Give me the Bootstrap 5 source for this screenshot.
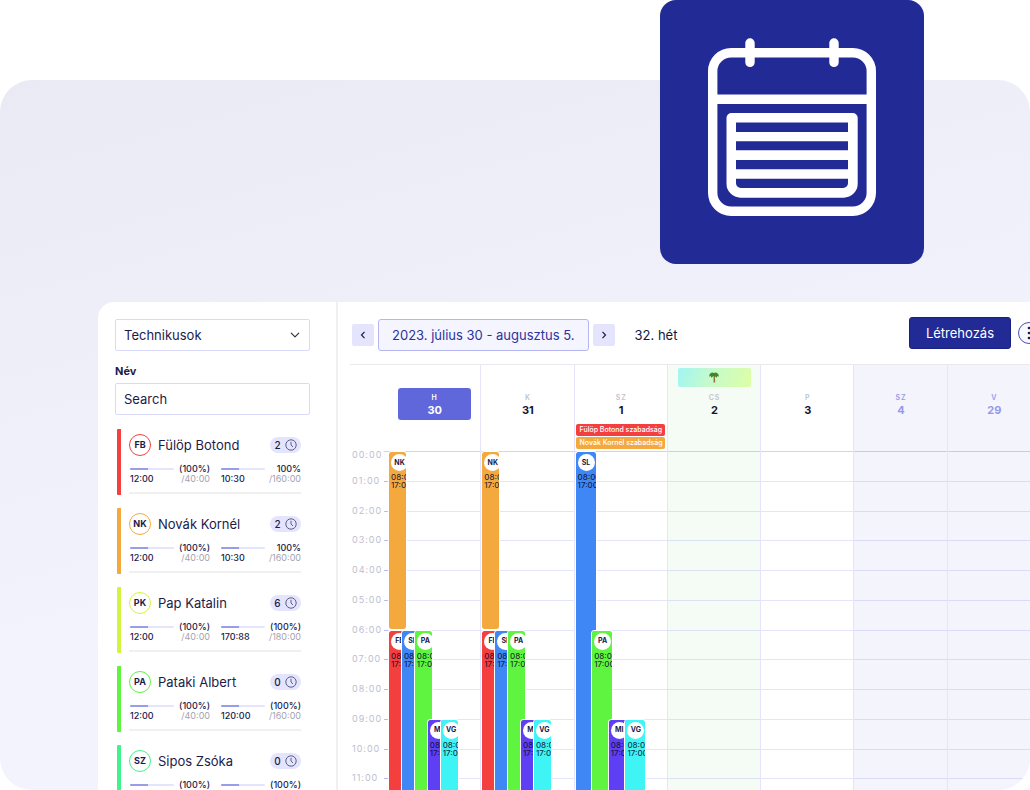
<!DOCTYPE html>
<html lang="hu">
<head>
<meta charset="utf-8">
<meta name="viewport" content="width=device-width, initial-scale=1">
<title>Naptár</title>
<link href="https://cdn.jsdelivr.net/npm/bootstrap@5.3.0/dist/css/bootstrap.min.css" rel="stylesheet">
<style>
  :root { --navy: #222a96; --ink: #1b1c4a; --lav: #e4e5fd; --line: #e4e5fb; --soft: #f0f0f1; }
  body { font-family: Inter, "Liberation Sans", sans-serif; color: var(--ink); font-size: 13px; line-height: 16px; background: #fff; }
  .hero-tile { top: 0; right: 106px; width: 264px; border-radius: 16px; background: var(--navy); z-index: 2; }
  .stage { margin-top: 80px; padding: 222px 0 0 98px; border-radius: 32px; background: linear-gradient(165deg, #eaeaf5, #f3f3fd 60%); }
  .app-panel { margin-right: -10px; border-top-left-radius: 16px; }

  .side { width: 240px; padding: 17px 26px 0 17px; border-right: 2px solid var(--soft); }
  .side .form-select, .side .form-control { height: 32px; padding: 0 8px; font-size: 13px; line-height: 16px; color: var(--ink); border: 1px solid #d9daf9; border-radius: 2px; }
  .side .form-select { background-size: 10px; background-position: right 9px center; }
  .side .form-control { margin-bottom: 14px; }
  .side .form-control::placeholder { color: var(--ink); opacity: 1; }
  .side .form-label { font-size: 11px; font-weight: 700; margin: 12px 0 4px; }

  .tech { height: 66px; margin: 0 9px 13px 2px; border-left: 4px solid var(--c); border-radius: 1px; padding: 5px 0 0 8px; }
  .tech-in { height: 60px; border-bottom: 2px solid var(--soft); }
  .ring { width: 22px; height: 22px; border: 1px solid var(--c); border-radius: 50%; font-size: 9px; font-weight: 700; }
  .tech-name { font-size: 13px; margin-left: 7px; }
  .jobs { height: 16px; width: 31px; border-radius: 8px; background: var(--lav); font-size: 10px; font-weight: 500; gap: 4px; }
  .stats { display: grid; grid-template-columns: 1fr 1fr; font-size: 9px; line-height: 10px; font-weight: 500; margin-top: 8px; padding-left: 1px; gap: 11px; }
  .stats .of { color: #a3a3b0; font-weight: 400; }
  .stats .progress { width: 44px; height: 2px; background: var(--lav); border-radius: 1px; }
  .stats .progress-bar { width: 42%; background: #989ce9; }

  .toolbar { padding: 15px 0 15px 14px; }
  .period { padding-top: 2px; margin-bottom: -2px; }
  .arrow { width: 22px; height: 22px; background: var(--lav); border-radius: 2px; border: 0; padding: 0; }
  .range { height: 32px; margin: 0 4px; padding: 0 13px; font-size: 13px; line-height: 16px; color: #2c329c; background: #f5f5ff; border: 1px solid #b3b6f0; border-radius: 3px; }
  .week { color: #14153a; margin-left: 20px; }
  .create { height: 32px; padding: 0 16px; font-size: 13px; line-height: 16px; color: #fff; background: var(--navy); border: 1px solid #1a2182; border-radius: 3px; }
  .more { width: 22px; height: 22px; border: 1px solid #4a50b4; border-radius: 50%; background: #f8f8ff; padding: 0; margin-left: 7px; }

  .cal { margin-left: 12px; border-top: 1px solid #e9e9ee; display: grid; }
  .cal > * { grid-area: 1 / 1; }
  .hours { margin-top: 86px; height: 357px; display: grid; grid-template-rows: repeat(12, 1fr); }
  .hour { display: flex; min-height: 0; font-size: 9px; line-height: 10px; color: #bdbed0; letter-spacing: 1px; }
  .hour span { width: 34px; padding-left: 2px; margin-top: -5px; }
  .hour:first-child span { margin-top: -1px; }
  .hour i { width: 4px; border-top: 1px solid #b9bbf0; }
  .hour b { flex: 1; border-top: 1px solid var(--line); }
  .hour:first-child i, .hour:first-child b { border-color: #d0d2f8; }
  .days { margin-left: 37px; display: grid; grid-template-columns: repeat(7, 1fr); }
  .day { min-width: 0; border-left: 1px solid var(--line); }
  .day:first-child { border-left-color: transparent; }
  .day-top { height: 86px; }
  .banner { height: 23px; padding: 3px 9px 0 10px; }
  .holiday { height: 19px; border-radius: 2px; background: linear-gradient(110deg, #a2f5f3, #c9fbc8 50%, #ddfea4); }
  .date { height: 32px; margin: 0 9px 0 10px; border-radius: 3px; padding-top: 5px; text-align: center; font-size: 11px; line-height: 16px; font-weight: 700; color: #14153a; }
  .date small { display: block; font-size: 7px; line-height: 9px; font-weight: 600; letter-spacing: 1px; color: #c2c3cc; }
  .today { background: #6067db; }
  .today, .today small { color: #fff; }
  .weekend { background: rgba(96, 103, 219, .07); }
  .weekend .date, .weekend .date small { color: #9498ea; }
  .free { background: rgba(60, 200, 90, .06); }
  .leave { height: 12px; margin: 0 2px 1px 1px; padding-left: 4px; border-radius: 2px; font-size: 7px; line-height: 12px; font-weight: 500; color: #fff; background: var(--c); white-space: nowrap; overflow: hidden; }
  .day-top .date + .leave { margin-top: 4px; }
  .day-body { height: 357px; position: relative; }
  .ev { position: absolute; left: var(--x); top: var(--y); width: 19px; height: calc(100% - var(--y)); border: 1px solid #fff; border-radius: 3px; background: var(--c); background-clip: padding-box; padding: 2px 0 0 2px; overflow: hidden; font-size: 8px; line-height: 8px; font-weight: 500; color: rgba(10, 10, 40, .85); }
  .ev.half { height: 50%; }
  .ev.wide { width: 22px; }
  .ev span { display: flex; align-items: center; justify-content: center; width: 17px; height: 17px; border-radius: 50%; background: #fff; font-size: 7px; font-weight: 700; color: var(--ink); margin-bottom: 2px; }
</style>
</head>
<body>
<svg class="d-none" xmlns="http://www.w3.org/2000/svg">
  <symbol id="clock" viewBox="0 0 12 12"><circle cx="6" cy="6" r="5.2"/><path d="M6 2.8V6l2 2"/></symbol>
</svg>

<main class="vh-100 d-flex flex-column overflow-hidden position-relative">
  <svg class="hero-tile position-absolute" viewBox="0 0 264 264" fill="none" stroke="#fff" stroke-width="9.4" aria-hidden="true">
    <rect x="52.7" y="52.7" width="158.6" height="158.6" rx="18.5"/>
    <path d="M53 99.3H211"/>
    <path d="M90 43v19.400M174 43v19.400" stroke-linecap="round"/>
    <path fill="#fff" stroke="none" fill-rule="evenodd" d="M71.500 113h121.200a5 5 0 0 1 5 5v65.700a14 14 0 0 1-14 14H80.500a14 14 0 0 1-14-14V118a5 5 0 0 1 5-5ZM76 122.400V132h112v-9.600ZM76 141.200V150.300h112v-9.100ZM76 160v9.300h112V160ZM76 178.700v4.500a4.800 4.800 0 0 0 4.800 4.800h102.400a4.800 4.800 0 0 0 4.800-4.800v-4.500Z"/>
  </svg>

  <section class="stage flex-grow-1 d-flex overflow-hidden">
    <div class="app-panel bg-white flex-grow-1 d-flex overflow-hidden">

      <aside class="side flex-shrink-0">
        <select class="form-select" aria-label="Csoport"><option>Technikusok</option></select>
        <label class="form-label d-block" for="nev">Név</label>
        <input class="form-control" id="nev" type="text" placeholder="Search">

        <article class="tech" style="--c:#f43f3f"><div class="tech-in">
          <div class="d-flex align-items-center"><span class="ring d-flex align-items-center justify-content-center">FB</span><span class="tech-name">Fülöp Botond</span>
            <span class="jobs ms-auto d-flex align-items-center justify-content-center">2<svg width="12" height="12" fill="none" stroke="#4d4f7d" stroke-width=".9"><use href="#clock"/></svg></span></div>
          <div class="stats">
            <div><div class="d-flex align-items-center justify-content-between"><div class="progress"><div class="progress-bar"></div></div><span>(100%)</span></div><div class="d-flex justify-content-between"><span>12:00</span><span class="of">/40:00</span></div></div>
            <div><div class="d-flex align-items-center justify-content-between"><div class="progress"><div class="progress-bar"></div></div><span>100%</span></div><div class="d-flex justify-content-between"><span>10:30</span><span class="of">/160:00</span></div></div>
          </div></div></article>

        <article class="tech" style="--c:#f4a93f"><div class="tech-in">
          <div class="d-flex align-items-center"><span class="ring d-flex align-items-center justify-content-center">NK</span><span class="tech-name">Novák Kornél</span>
            <span class="jobs ms-auto d-flex align-items-center justify-content-center">2<svg width="12" height="12" fill="none" stroke="#4d4f7d" stroke-width=".9"><use href="#clock"/></svg></span></div>
          <div class="stats">
            <div><div class="d-flex align-items-center justify-content-between"><div class="progress"><div class="progress-bar"></div></div><span>(100%)</span></div><div class="d-flex justify-content-between"><span>12:00</span><span class="of">/40:00</span></div></div>
            <div><div class="d-flex align-items-center justify-content-between"><div class="progress"><div class="progress-bar"></div></div><span>100%</span></div><div class="d-flex justify-content-between"><span>10:30</span><span class="of">/160:00</span></div></div>
          </div></div></article>

        <article class="tech" style="--c:#d3f43f"><div class="tech-in">
          <div class="d-flex align-items-center"><span class="ring d-flex align-items-center justify-content-center">PK</span><span class="tech-name">Pap Katalin</span>
            <span class="jobs ms-auto d-flex align-items-center justify-content-center">6<svg width="12" height="12" fill="none" stroke="#4d4f7d" stroke-width=".9"><use href="#clock"/></svg></span></div>
          <div class="stats">
            <div><div class="d-flex align-items-center justify-content-between"><div class="progress"><div class="progress-bar"></div></div><span>(100%)</span></div><div class="d-flex justify-content-between"><span>12:00</span><span class="of">/40:00</span></div></div>
            <div><div class="d-flex align-items-center justify-content-between"><div class="progress"><div class="progress-bar"></div></div><span>(100%)</span></div><div class="d-flex justify-content-between"><span>170:88</span><span class="of">/180:00</span></div></div>
          </div></div></article>

        <article class="tech" style="--c:#5ef43f"><div class="tech-in">
          <div class="d-flex align-items-center"><span class="ring d-flex align-items-center justify-content-center">PA</span><span class="tech-name">Pataki Albert</span>
            <span class="jobs ms-auto d-flex align-items-center justify-content-center">0<svg width="12" height="12" fill="none" stroke="#4d4f7d" stroke-width=".9"><use href="#clock"/></svg></span></div>
          <div class="stats">
            <div><div class="d-flex align-items-center justify-content-between"><div class="progress"><div class="progress-bar"></div></div><span>(100%)</span></div><div class="d-flex justify-content-between"><span>12:00</span><span class="of">/40:00</span></div></div>
            <div><div class="d-flex align-items-center justify-content-between"><div class="progress"><div class="progress-bar"></div></div><span>(100%)</span></div><div class="d-flex justify-content-between"><span>120:00</span><span class="of">/160:00</span></div></div>
          </div></div></article>

        <article class="tech" style="--c:#3ff48c"><div class="tech-in">
          <div class="d-flex align-items-center"><span class="ring d-flex align-items-center justify-content-center">SZ</span><span class="tech-name">Sipos Zsóka</span>
            <span class="jobs ms-auto d-flex align-items-center justify-content-center">0<svg width="12" height="12" fill="none" stroke="#4d4f7d" stroke-width=".9"><use href="#clock"/></svg></span></div>
          <div class="stats">
            <div><div class="d-flex align-items-center justify-content-between"><div class="progress"><div class="progress-bar"></div></div><span>(100%)</span></div></div>
            <div><div class="d-flex align-items-center justify-content-between"><div class="progress"><div class="progress-bar"></div></div><span>(100%)</span></div></div>
          </div></div></article>
      </aside>

      <div class="flex-grow-1">
        <div class="toolbar d-flex align-items-start">
          <div class="period d-flex align-items-center">
            <button class="arrow d-flex align-items-center justify-content-center" type="button" aria-label="Előző hét"><svg width="10" height="10" viewBox="0 0 10 10" fill="none" stroke="#1b1c4a" stroke-width="1.200"><path d="M6.500 1.800 3.500 5l3 3.200"/></svg></button>
            <button class="range" type="button">2023. július 30 - augusztus 5.</button>
            <button class="arrow d-flex align-items-center justify-content-center" type="button" aria-label="Következő hét"><svg width="10" height="10" viewBox="0 0 10 10" fill="none" stroke="#1b1c4a" stroke-width="1.200"><path d="M3.500 1.800l3 3.200-3 3.200"/></svg></button>
            <span class="week">32. hét</span>
          </div>
          <div class="d-flex align-items-center ms-auto">
            <button class="create" type="button">Létrehozás</button>
            <button class="more d-flex align-items-center justify-content-center" type="button" aria-label="Továbbiak"><svg width="4" height="14" viewBox="0 0 4 14" fill="#1b1c4a"><circle cx="2" cy="2" r="1.300"/><circle cx="2" cy="7" r="1.300"/><circle cx="2" cy="12" r="1.300"/></svg></button>
          </div>
        </div>

        <div class="cal">
          <div class="hours">
            <div class="hour"><span>00:00</span><i></i><b></b></div>
            <div class="hour"><span>01:00</span><i></i><b></b></div>
            <div class="hour"><span>02:00</span><i></i><b></b></div>
            <div class="hour"><span>03:00</span><i></i><b></b></div>
            <div class="hour"><span>04:00</span><i></i><b></b></div>
            <div class="hour"><span>05:00</span><i></i><b></b></div>
            <div class="hour"><span>06:00</span><i></i><b></b></div>
            <div class="hour"><span>07:00</span><i></i><b></b></div>
            <div class="hour"><span>08:00</span><i></i><b></b></div>
            <div class="hour"><span>09:00</span><i></i><b></b></div>
            <div class="hour"><span>10:00</span><i></i><b></b></div>
            <div class="hour"><span>11:00</span><i></i><b></b></div>
          </div>
          <div class="days">
            <div class="day">
              <div class="day-top"><div class="banner"></div><div class="date today"><small>H</small>30</div></div>
              <div class="day-body">
                <div class="ev half" style="--x:0%;--y:0%;--c:#f4a93f"><span>NK</span>08:00<br>17:00</div>
                <div class="ev" style="--x:0%;--y:50%;--c:#f43f3f"><span>FB</span>08:00<br>17:00</div>
                <div class="ev" style="--x:14%;--y:50%;--c:#3f87f4"><span>SL</span>08:00<br>17:00</div>
                <div class="ev" style="--x:28%;--y:50%;--c:#5ef43f"><span>PA</span>08:00<br>17:00</div>
                <div class="ev" style="--x:42%;--y:75%;--c:#5f3ff4"><span>MI</span>08:00<br>17:00</div>
                <div class="ev" style="--x:56%;--y:75%;--c:#3ff4f4"><span>VG</span>08:00<br>17:00</div>
              </div>
            </div>
            <div class="day">
              <div class="day-top"><div class="banner"></div><div class="date"><small>K</small>31</div></div>
              <div class="day-body">
                <div class="ev half" style="--x:0%;--y:0%;--c:#f4a93f"><span>NK</span>08:00<br>17:00</div>
                <div class="ev" style="--x:0%;--y:50%;--c:#f43f3f"><span>FB</span>08:00<br>17:00</div>
                <div class="ev" style="--x:14%;--y:50%;--c:#3f87f4"><span>SL</span>08:00<br>17:00</div>
                <div class="ev" style="--x:28%;--y:50%;--c:#5ef43f"><span>PA</span>08:00<br>17:00</div>
                <div class="ev" style="--x:42%;--y:75%;--c:#5f3ff4"><span>MI</span>08:00<br>17:00</div>
                <div class="ev" style="--x:56%;--y:75%;--c:#3ff4f4"><span>VG</span>08:00<br>17:00</div>
              </div>
            </div>
            <div class="day">
              <div class="day-top"><div class="banner"></div><div class="date"><small>SZ</small>1</div>
                <div class="leave" style="--c:#f43f3f">Fülöp Botond szabadság</div>
                <div class="leave" style="--c:#f4a93f">Novák Kornél szabadság</div></div>
              <div class="day-body">
                <div class="ev wide" style="--x:0%;--y:0%;--c:#3f87f4"><span>SL</span>08:00<br>17:00</div>
                <div class="ev wide" style="--x:18%;--y:50%;--c:#5ef43f"><span>PA</span>08:00<br>17:00</div>
                <div class="ev wide" style="--x:36%;--y:75%;--c:#5f3ff4"><span>MI</span>08:00<br>17:00</div>
                <div class="ev wide" style="--x:54%;--y:75%;--c:#3ff4f4"><span>VG</span>08:00<br>17:00</div>
              </div>
            </div>
            <div class="day free">
              <div class="day-top"><div class="banner"><div class="holiday d-flex align-items-center justify-content-center">
                <svg width="10" height="11" viewBox="0 0 10 11"><path d="M4.500 3h1.400l.3 7.500H4.600Z" fill="#94703f"/><path d="M5 1C3.500-.2 1 .5.400 3.100c-.2 1 .1 1.600.5 1.900.2-.6.600-1 1.100-1.200-.1.700 0 1.300.3 1.900C3 4.900 4 4 5 3.900c1 .1 2 1 2.700 1.800.3-.6.400-1.200.3-1.900.5.200.9.600 1.100 1.200.4-.3.700-.9.500-1.900C9 .5 6.500-.2 5 1Z" fill="#41862a"/></svg>
              </div></div><div class="date"><small>CS</small>2</div></div>
            </div>
            <div class="day">
              <div class="day-top"><div class="banner"></div><div class="date"><small>P</small>3</div></div>
            </div>
            <div class="day weekend">
              <div class="day-top"><div class="banner"></div><div class="date"><small>SZ</small>4</div></div>
            </div>
            <div class="day weekend">
              <div class="day-top"><div class="banner"></div><div class="date"><small>V</small>29</div></div>
            </div>
          </div>
        </div>
      </div>
    </div>
  </section>
</main>
<script src="https://cdn.jsdelivr.net/npm/bootstrap@5.3.0/dist/js/bootstrap.bundle.min.js"></script>
</body>
</html>
